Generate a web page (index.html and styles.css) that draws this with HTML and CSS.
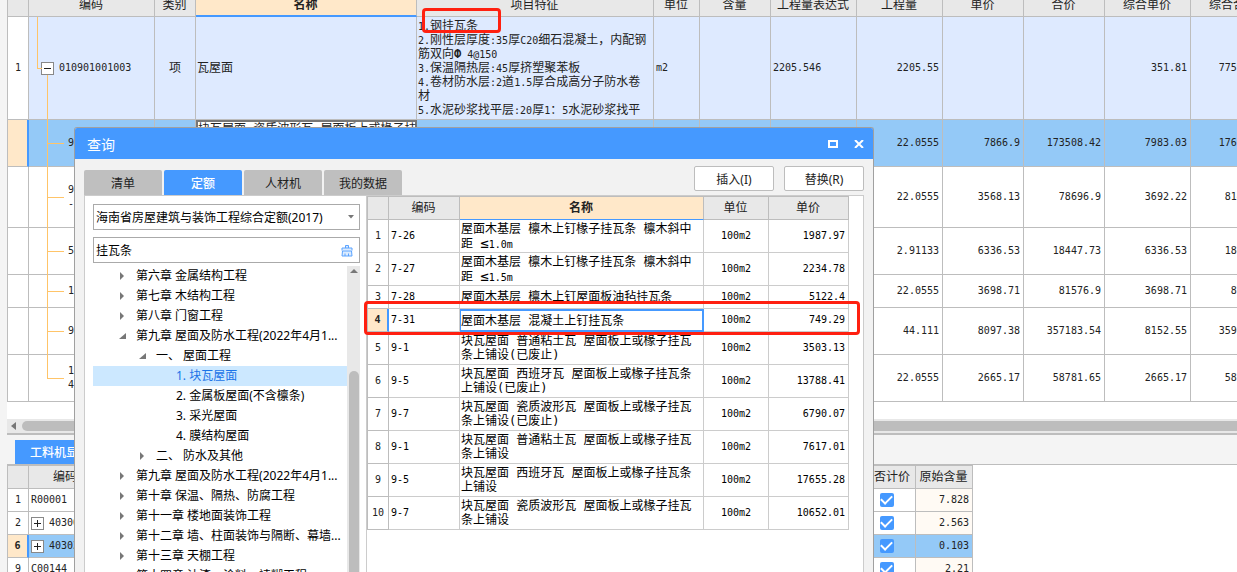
FILE: index.html
```
<!DOCTYPE html>
<html lang="zh-CN">
<head>
<meta charset="utf-8">
<title>查询</title>
<link rel="stylesheet" href="styles.css">
</head>
<body>
<div class="app">
  <main class="workspace">
    <section class="sheet">
      <table class="grid main-grid">
        <colgroup><col class="w-idx"><col class="w-code"><col class="w-type"><col class="w-name"><col class="w-feature"><col class="w-unit"><col class="w-content"><col class="w-86"><col class="w-86"><col class="w-81"><col class="w-81"><col class="w-86"><col class="w-86"></colgroup>
        <thead>
          <tr><th></th><th>编码</th><th>类别</th><th class="current">名称</th><th>项目特征</th><th>单位</th><th>含量</th><th>工程量表达式</th><th>工程量</th><th>单价</th><th>合价</th><th>综合单价</th><th>综合合价</th></tr>
        </thead>
        <tbody>
          <tr class="parent h-103"><td class="idx">1</td><td class="code root"><button class="toggle" type="button" aria-label="折叠"><svg viewBox="0 0 11 11"><path d="M2 5.500h7"/></svg></button>010901001003</td><td class="mid">项</td><td class="txt">瓦屋面</td><td class="txt feature"><span>1.</span>钢挂瓦条<br><span>2.</span>刚性层厚度<span>:35</span>厚<span>C20</span>细石混凝土，内配钢<br>筋双向<b>Ф</b><span>&nbsp;4@150</span><br><span>3.</span>保温隔热层<span>:45</span>厚挤塑聚苯板<br><span>4.</span>卷材防水层<span>:2</span>道<span>1.5</span>厚合成高分子防水卷<br>材<br><span>5.</span>水泥砂浆找平层<span>:20</span>厚<span>1</span>：<span>5</span>水泥砂浆找平</td><td>m2</td><td></td><td>2205.546</td><td class="num">2205.55</td><td></td><td></td><td class="num">351.81</td><td class="num">775932.55</td></tr>
          <tr class="active h-47"><td class="idx"></td><td class="code leaf">9</td><td></td><td class="txt editing">块瓦屋面 瓷质波形瓦 屋面板上或椽子挂</td><td></td><td></td><td></td><td></td><td class="num">22.0555</td><td class="num">7866.9</td><td class="num">173508.42</td><td class="num">7983.03</td><td class="num">176069.72</td></tr>
          <tr class="h-61"><td></td><td class="code leaf">9<br>-</td><td></td><td></td><td></td><td></td><td></td><td></td><td class="num">22.0555</td><td class="num">3568.13</td><td class="num">78696.9</td><td class="num">3692.22</td><td class="num">81433.76</td></tr>
          <tr class="h-47"><td></td><td class="code leaf">5</td><td></td><td></td><td></td><td></td><td></td><td></td><td class="num">2.91133</td><td class="num">6336.53</td><td class="num">18447.73</td><td class="num">6336.53</td><td class="num">18447.73</td></tr>
          <tr class="h-33"><td></td><td class="code leaf">1</td><td></td><td></td><td></td><td></td><td></td><td></td><td class="num">22.0555</td><td class="num">3698.71</td><td class="num">81576.9</td><td class="num">3698.71</td><td class="num">81576.9</td></tr>
          <tr class="h-47"><td></td><td class="code leaf">9</td><td></td><td></td><td></td><td></td><td></td><td></td><td class="num">44.111</td><td class="num">8097.38</td><td class="num">357183.54</td><td class="num">8152.55</td><td class="num">359617.13</td></tr>
          <tr class="h-47"><td></td><td class="code leaf last">1<br>4</td><td></td><td></td><td></td><td></td><td></td><td></td><td class="num">22.0555</td><td class="num">2665.17</td><td class="num">58781.65</td><td class="num">2665.17</td><td class="num">58781.65</td></tr>
        </tbody>
      </table>
      <div class="mark mark-feature"></div>
    </section>
    <div class="hscroll"><svg class="arrow" viewBox="0 0 6 8"><path d="M5 0v8L0 4z"/></svg><div class="thumb"></div></div>
    <div class="detail-tabs"><button type="button" class="detail-tab">工料机显示</button></div>
    <section class="detail">
      <table class="grid detail-grid">
        <colgroup><col class="w-idx"><col class="w-dcode"><col class="w-rest"><col class="w-check"><col class="w-orig"></colgroup>
        <thead><tr><th></th><th>编码</th><th></th><th>是否计价</th><th>原始含量</th></tr></thead>
        <tbody>
          <tr><td class="idx">1</td><td>R00001</td><td></td><td class="mid"><input type="checkbox" aria-label="是否计价 1" checked></td><td class="num cream">7.828</td></tr>
          <tr><td class="idx">2</td><td><button class="toggle" type="button" aria-label="展开"><svg viewBox="0 0 11 11"><path d="M2 5.500h7M5.500 2v7"/></svg></button>40300</td><td></td><td class="mid"><input type="checkbox" aria-label="是否计价 2" checked></td><td class="num cream">2.563</td></tr>
          <tr class="active"><td class="idx">6</td><td><button class="toggle" type="button" aria-label="展开"><svg viewBox="0 0 11 11"><path d="M2 5.500h7M5.500 2v7"/></svg></button>40303</td><td></td><td class="mid"><input type="checkbox" aria-label="是否计价 6" checked></td><td class="num">0.103</td></tr>
          <tr><td class="idx">9</td><td>C00144</td><td></td><td class="mid"><input type="checkbox" aria-label="是否计价 9" checked></td><td class="num cream">2.21</td></tr>
        </tbody>
      </table>
    </section>
  </main>

  <div class="dialog" role="dialog" aria-labelledby="dialog-title">
    <header class="titlebar">
      <h1 id="dialog-title">查询</h1>
      <button type="button" class="win-btn" aria-label="最大化"><svg viewBox="0 0 10 8"><path d="M1 1h8v6H1z"/></svg></button>
      <button type="button" class="win-btn" aria-label="关闭"><svg viewBox="0 0 10 8"><path d="M1 0l8 8M9 0L1 8"/></svg></button>
    </header>
    <div class="toolbar">
      <nav class="tabs">
        <button type="button" class="tab">清单</button>
        <button type="button" class="tab selected">定额</button>
        <button type="button" class="tab">人材机</button>
        <button type="button" class="tab">我的数据</button>
      </nav>
      <div class="actions"><button type="button">插入(I)</button><button type="button">替换(R)</button></div>
    </div>
    <div class="panel">
      <aside class="side">
        <div class="field">
          <select aria-label="定额库"><option>海南省房屋建筑与装饰工程综合定额(2017)</option></select>
          <svg class="caret" viewBox="0 0 6 4"><path d="M0 0h6L3 3.500z"/></svg>
        </div>
        <div class="field">
          <input type="text" aria-label="搜索" value="挂瓦条">
          <button type="button" class="clear" aria-label="清空"><svg viewBox="0 0 12 13"><path d="M4.500 4V1.500h3V4M1 6.500V4h10v2.500M1.500 7L1 12h10l-.5-5z M4 12V9.500M7.500 12V9.500"/></svg></button>
        </div>
        <div class="tree-wrap">
          <ul class="tree">
            <li class="l1"><svg viewBox="0 0 7 8"><path d="M1 0v8l4-4z"/></svg>第六章 金属结构工程</li>
            <li class="l1"><svg viewBox="0 0 7 8"><path d="M1 0v8l4-4z"/></svg>第七章 木结构工程</li>
            <li class="l1"><svg viewBox="0 0 7 8"><path d="M1 0v8l4-4z"/></svg>第八章 门窗工程</li>
            <li class="l1"><svg viewBox="0 0 7 8"><path d="M7 1v6H0z"/></svg>第九章 屋面及防水工程(2022年4月1...</li>
            <li class="l2"><svg viewBox="0 0 7 8"><path d="M7 1v6H0z"/></svg>一、 屋面工程</li>
            <li class="l3 chosen">1. 块瓦屋面</li>
            <li class="l3">2. 金属板屋面(不含檩条)</li>
            <li class="l3">3. 采光屋面</li>
            <li class="l3">4. 膜结构屋面</li>
            <li class="l2"><svg viewBox="0 0 7 8"><path d="M1 0v8l4-4z"/></svg>二、 防水及其他</li>
            <li class="l1"><svg viewBox="0 0 7 8"><path d="M1 0v8l4-4z"/></svg>第九章 屋面及防水工程(2022年4月1...</li>
            <li class="l1"><svg viewBox="0 0 7 8"><path d="M1 0v8l4-4z"/></svg>第十章 保温、隔热、防腐工程</li>
            <li class="l1"><svg viewBox="0 0 7 8"><path d="M1 0v8l4-4z"/></svg>第十一章 楼地面装饰工程</li>
            <li class="l1"><svg viewBox="0 0 7 8"><path d="M1 0v8l4-4z"/></svg>第十二章 墙、柱面装饰与隔断、幕墙...</li>
            <li class="l1"><svg viewBox="0 0 7 8"><path d="M1 0v8l4-4z"/></svg>第十三章 天棚工程</li>
            <li class="l1"><svg viewBox="0 0 7 8"><path d="M1 0v8l4-4z"/></svg>第十四章 油漆、涂料、裱糊工程</li>
          </ul>
          <div class="vscroll"><svg viewBox="0 0 8 4"><path d="M0 4h8L4 0z"/></svg><div class="thumb"></div></div>
        </div>
      </aside>
      <section class="results">
        <table class="grid result-grid">
          <colgroup><col class="w-idx"><col class="w-rcode"><col class="w-rname"><col class="w-runit"><col class="w-rprice"></colgroup>
          <thead><tr><th></th><th>编码</th><th class="current">名称</th><th>单位</th><th>单价</th></tr></thead>
          <tbody>
            <tr class="h-33"><td class="idx">1</td><td>7-26</td><td class="txt">屋面木基层 檩木上钉椽子挂瓦条 檩木斜中<br>距 <b class="sign">≤</b><span>1.0m</span></td><td class="mid">100m2</td><td class="num">1987.97</td></tr>
            <tr class="h-33"><td class="idx">2</td><td>7-27</td><td class="txt">屋面木基层 檩木上钉椽子挂瓦条 檩木斜中<br>距 <b class="sign">≤</b><span>1.5m</span></td><td class="mid">100m2</td><td class="num">2234.78</td></tr>
            <tr><td class="idx">3</td><td>7-28</td><td class="txt">屋面木基层 檩木上钉屋面板油毡挂瓦条</td><td class="mid">100m2</td><td class="num">5122.4</td></tr>
            <tr class="picked"><td class="idx">4</td><td>7-31</td><td class="txt focus">屋面木基层 混凝土上钉挂瓦条</td><td class="mid">100m2</td><td class="num">749.29</td></tr>
            <tr class="h-33"><td class="idx">5</td><td>9-1</td><td class="txt">块瓦屋面 普通粘土瓦 屋面板上或椽子挂瓦<br>条上铺设(已废止)</td><td class="mid">100m2</td><td class="num">3503.13</td></tr>
            <tr class="h-33"><td class="idx">6</td><td>9-5</td><td class="txt">块瓦屋面 西班牙瓦 屋面板上或椽子挂瓦条<br>上铺设(已废止)</td><td class="mid">100m2</td><td class="num">13788.41</td></tr>
            <tr class="h-33"><td class="idx">7</td><td>9-7</td><td class="txt">块瓦屋面 瓷质波形瓦 屋面板上或椽子挂瓦<br>条上铺设(已废止)</td><td class="mid">100m2</td><td class="num">6790.07</td></tr>
            <tr class="h-33"><td class="idx">8</td><td>9-1</td><td class="txt">块瓦屋面 普通粘土瓦 屋面板上或椽子挂瓦<br>条上铺设</td><td class="mid">100m2</td><td class="num">7617.01</td></tr>
            <tr class="h-33"><td class="idx">9</td><td>9-5</td><td class="txt">块瓦屋面 西班牙瓦 屋面板上或椽子挂瓦条<br>上铺设</td><td class="mid">100m2</td><td class="num">17655.28</td></tr>
            <tr class="h-33"><td class="idx">10</td><td>9-7</td><td class="txt">块瓦屋面 瓷质波形瓦 屋面板上或椽子挂瓦<br>条上铺设</td><td class="mid">100m2</td><td class="num">10652.01</td></tr>
          </tbody>
        </table>
        <div class="mark mark-row"></div>
      </section>
    </div>
  </div>
</div>
</body>
</html>
```
FILE: styles.css
```
* { box-sizing: border-box; }

body {
  margin: 0;
  font-family: "Noto Sans", "Noto Sans CJK SC", sans-serif;
  font-size: 12px;
  color: #222;
  background: #f4f4f4;
}

button, input, select { font: inherit; color: inherit; margin: 0; padding: 0; }

.app {
  position: relative;
  height: 100vh;
  overflow: hidden;
  padding-left: 7px;
}

.workspace {
  display: flex;
  flex-direction: column;
  height: 100%;
}

/* Data grids */
.grid {
  table-layout: fixed;
  border-spacing: 0;
  border-left: 1px solid #bdbdbd;
  width: 0;
  font-family: "DejaVu Sans Mono", "Noto Sans CJK SC", monospace;
  font-size: 10px;
  line-height: 14px;
}
.grid th, .grid td {
  padding: 0 3px 0 2px;
  border-right: 1px solid #bdbdbd;
  border-bottom: 1px solid #bdbdbd;
  text-align: left;
  white-space: nowrap;
  vertical-align: middle;
}
.grid tr { height: 23px; }
.grid .h-33 { height: 33px; }
.grid .h-47 { height: 47px; }
.grid .h-61 { height: 61px; }
.grid .h-103 { height: 103px; }
.grid th {
  background: #e8e8e8;
  font-size: 12px;
  font-weight: 400;
  text-align: center;
}
.grid th.current {
  background: #ffe8c9;
  border-bottom: 1px solid #4599ff;
  font-weight: 700;
}
.grid .idx, .grid .mid { text-align: center; padding: 0; }
.grid .num { text-align: right; }
.grid .txt { font-size: 12px; padding-left: 1px; }
.grid .txt span { font-size: 10px; line-height: 1; }
.grid .sign { font-size: 14px; font-weight: 400; line-height: 1; }
.grid .mid { font-size: 10px; }
.grid .active td { background: #94c9f7; }
.grid .active .idx { background: #ffe8c9; border-right: 2px solid #4599ff; font-weight: 700; }

.w-idx { width: 21px; }
.w-code { width: 126px; }
.w-type { width: 41px; }
.w-name { width: 221px; }
.w-feature { width: 237px; }
.w-unit { width: 46px; }
.w-content { width: 71px; }
.w-86 { width: 86px; }
.w-81 { width: 81px; }
.w-dcode { width: 74px; }
.w-rest { width: 755px; }
.w-check { width: 58px; }
.w-orig { width: 57px; }
.w-rcode { width: 71px; }
.w-rname { width: 244px; }
.w-runit { width: 65px; }
.w-rprice { width: 80px; }

/* Main sheet, scrolled a few pixels past its header */
.sheet {
  position: relative;
  flex: none;
  overflow: hidden;
  padding-bottom: 17px;
  background: #fff;
}
.main-grid { margin-top: -6px; }
.main-grid th.current { border-bottom-width: 2px; }
.parent td { background: #deeaff; }
.grid .parent .idx { background: #fff; }
.grid .parent .mid { font-size: 12px; }
.grid .active .editing {
  padding: 0;
  background: #fff;
  border: 2px solid #777;
  vertical-align: top;
}

.toggle {
  display: inline-block;
  width: 13px;
  height: 13px;
  margin-right: 5px;
  border: 1px solid #888;
  background: #fff;
  vertical-align: middle;
}
.toggle svg { display: block; width: 11px; height: 11px; fill: none; stroke: #222; }

.code { position: relative; }
.grid .root { padding-left: 12px; }
.grid .leaf { padding-left: 39px; }
.code::before, .code::after { content: ""; position: absolute; }
.root::before {
  left: 8px; top: 0; width: 4px; height: 51px;
  border-left: 1px solid #ffc468;
  border-bottom: 1px solid #ffc468;
}
.root::after { left: 18px; top: 58px; bottom: -1px; border-left: 1px solid #ffc468; }
.leaf::before { left: 18px; top: 0; bottom: -1px; border-left: 1px solid #ffc468; }
.leaf.last::before { bottom: 50%; }
.leaf::after { left: 18px; top: 50%; width: 17px; border-top: 1px solid #ffc468; }

.hscroll {
  display: flex;
  align-items: center;
  gap: 5px;
  height: 16px;
  flex: none;
  padding-left: 4px;
  background: #e8e8e8;
  border-bottom: 2px solid #bdbdbd;
}
.hscroll .arrow { width: 6px; height: 8px; fill: #777; }
.hscroll .thumb { flex: 1; height: 10px; border-radius: 5px 0 0 5px; background: #bdbdbd; }

.detail-tabs { display: flex; flex: none; height: 29px; padding: 5px 0 0 8px; }
.detail-tab {
  width: 90px;
  border: 0;
  background: #4599ff;
  color: #fff;
  font-weight: 500;
}
.detail {
  flex: 1;
  min-height: 0;
  overflow: hidden;
  background: #fff;
  border-top: 1px solid #bdbdbd;
}
.detail-grid { border-top: 1px solid #bdbdbd; }
.grid .cream { background: #fffaf4; }
.detail input {
  display: grid;
  place-items: center;
  appearance: none;
  width: 14px;
  height: 14px;
  margin: 0 auto;
  border-radius: 2px;
  background: #4599ff;
}
.detail input:checked::after {
  content: "";
  width: 9px;
  height: 5px;
  margin-bottom: 3px;
  border-left: 2px solid #fff;
  border-bottom: 2px solid #fff;
  rotate: -45deg;
}

/* Query dialog */
.dialog {
  position: absolute;
  left: 74px;
  top: 127px;
  bottom: 0;
  width: 800px;
  display: flex;
  flex-direction: column;
  border: 1px solid #a0a0a0;
  border-width: 1px 1px 0;
  border-radius: 3px 3px 0 0;
  background: #f2f2f2;
  overflow: hidden;
}
.titlebar {
  display: flex;
  align-items: center;
  flex: none;
  height: 31px;
  gap: 16px;
  padding: 0 9px 0 12px;
  background: #4599ff;
  color: #fff;
}
.titlebar h1 { flex: 1; margin: 0; padding-top: 2px; font-size: 14px; line-height: 20px; font-weight: 400; }
.win-btn { width: 10px; height: 8px; border: 0; background: none; }
.win-btn svg { display: block; width: 10px; height: 8px; fill: none; stroke: #fff; stroke-width: 2; }

.toolbar {
  display: flex;
  align-items: flex-end;
  justify-content: space-between;
  flex: none;
  height: 36px;
  padding: 0 9px;
}
.tabs { display: flex; gap: 2px; }
.tab {
  width: 78px;
  height: 25px;
  border: 0;
  border-radius: 2px 2px 0 0;
  background: #bfbfbf;
}
.tab.selected { background: #4599ff; color: #fff; font-weight: 500; }
.actions { display: flex; gap: 10px; padding-bottom: 4px; }
.actions button {
  width: 80px;
  height: 25px;
  border: 1px solid #bdbdbd;
  border-radius: 2px;
  background: #fff;
}

.panel {
  display: flex;
  flex: 1;
  min-height: 0;
  margin: 0 9px;
  border: 1px solid #ccc;
  border-bottom: 0;
  background: #fff;
}
.side {
  display: flex;
  flex-direction: column;
  width: 281px;
  padding: 8px 6px 0 8px;
  color: #000;
}
.field {
  position: relative;
  flex: none;
  height: 26px;
  margin-bottom: 7px;
  border: 1px solid #aaa;
}
.field select, .field input {
  appearance: none;
  display: block;
  width: 100%;
  height: 100%;
  padding: 0 20px 0 2px;
  border: 0;
  background: #fff;
  outline: 0;
}
.caret { position: absolute; right: 5px; top: 10px; width: 6px; height: 4px; fill: #777; pointer-events: none; }
.clear { position: absolute; right: 6px; top: 6px; width: 12px; height: 13px; border: 0; background: none; }
.clear svg { display: block; width: 12px; height: 13px; fill: #dcecff; stroke: #5aa3ff; }

.tree-wrap { display: flex; flex: 1; min-height: 0; margin-top: -4px; overflow: hidden; }
.tree { flex: 1; margin: 0; padding: 0; list-style: none; }
.tree li { display: flex; align-items: center; height: 20px; line-height: 20px; white-space: nowrap; }
.tree svg { flex: none; width: 7px; height: 8px; margin-right: 10px; fill: #777; }
.tree .l1 { padding-left: 26px; }
.tree .l2 { padding-left: 46px; }
.tree .l3 { padding-left: 83px; }
.tree .chosen { background: #cce8ff; color: #1a73e8; }
.vscroll {
  display: flex;
  flex-direction: column;
  align-items: center;
  width: 13px;
  background: #e8e8e8;
}
.vscroll svg { flex: none; width: 8px; height: 4px; margin: 3px 0 98px; fill: #777; }
.vscroll .thumb { flex: 1; width: 10px; border-radius: 5px 5px 0 0; background: #bdbdbd; }

.results { position: relative; flex: 1; border-left: 1px solid #ccc; color: #000; }
.result-grid { border-top: 1px solid #bdbdbd; }
.result-grid td { border-color: #ccc; }
.result-grid th { color: #222; }
.result-grid .idx { border-color: #bdbdbd; color: #222; }
.grid .picked .idx { background: #ffe8c9; border-right: 2px solid #4599ff; font-weight: 700; }
.grid .focus { padding: 0; border: 2px solid #4599ff; border-left-width: 1px; }

/* Red annotations */
.mark { position: absolute; border: 3px solid #ff2010; border-radius: 4px; pointer-events: none; }
.mark-feature { left: 415px; top: 8px; width: 79px; height: 25px; }
.mark-row { left: -3px; top: 105px; width: 496px; height: 34px; }
```
